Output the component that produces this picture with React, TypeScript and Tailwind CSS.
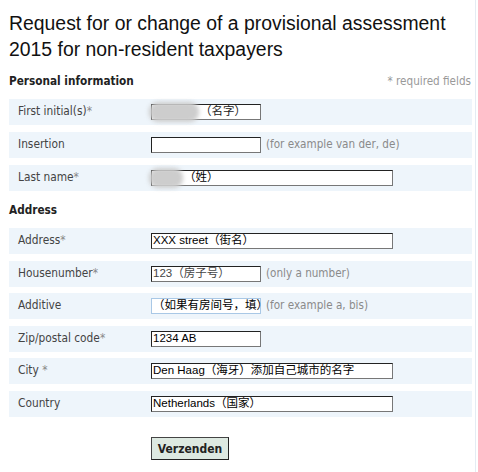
import React from "react";

const labelFont = { fontFamily: '"DejaVu Sans Condensed", "DejaVu Sans", Verdana, sans-serif' };
const inputFont = { fontFamily: '"Liberation Sans", Arial, "Noto Sans CJK SC", sans-serif' };

function Row({ label, star, children, hint }: { label: string; star?: string; children: React.ReactNode; hint?: string }) {
  return (
    <div className="flex items-center h-[26px] bg-[#eef5fb]">
      <div className="w-[142px] pl-[9px] text-[11.8px] text-[#444]" style={labelFont}>
        {label}
        {star && <span className="text-[#888]">{star}</span>}
      </div>
      {children}
      {hint && (
        <span className="ml-[5px] text-[11.6px] text-[#8a8a8a]" style={labelFont}>
          {hint}
        </span>
      )}
    </div>
  );
}

function Box({ w, children, light }: { w: number; children?: React.ReactNode; light?: boolean }) {
  return (
    <div
      className={
        "relative h-[16px] bg-white flex items-center pl-[1px] text-[11.5px] leading-none text-black whitespace-nowrap overflow-visible " +
        (light ? "border border-[#a9c8e6]" : "border border-t-[#222] border-l-[#222] border-b-[#777] border-r-[#777]")
      }
      style={{ width: w, ...inputFont }}
    >
      {children}
    </div>
  );
}

function Blur({ w }: { w: number }) {
  return <span className="inline-block h-[20px] rounded-[9px] bg-[#cdcdcd] blur-[2px] -ml-[4px] mr-[1px]" style={{ width: w }} />;
}

export default function App() {
  return (
    <div className="w-[478px] h-[472px] bg-white overflow-hidden">
      <div className="w-[476px] h-[472px] border-r border-[#e4ecf3] pl-[9px] pr-[3px]">
        <h1
          className="pt-[10px] text-[19.4px] leading-[26px] text-[#111] font-normal"
          style={{ fontFamily: '"Liberation Sans", Arial, sans-serif' }}
        >
          Request for or change of a provisional assessment 2015 for non-resident taxpayers
        </h1>
        <div className="flex justify-between items-center mt-[13px] h-[14px]" style={labelFont}>
          <span className="text-[11.7px] font-bold text-[#222]">Personal information</span>
          <span className="text-[11.6px] text-[#999] mr-[1px]">* required fields</span>
        </div>
        <div className="mt-[10px] flex flex-col gap-[7px]">
          <Row label="First initial(s)" star="*">
            <Box w={110}>
              <Blur w={50} />
              <span className="text-[#222]">（名字）</span>
            </Box>
          </Row>
          <Row label="Insertion" hint="(for example van der, de)">
            <Box w={110} />
          </Row>
          <Row label="Last name" star="*">
            <Box w={242}>
              <Blur w={34} />
              <span>（姓）</span>
            </Box>
          </Row>
        </div>
        <div className="mt-[11px] h-[14px] text-[11.7px] font-bold text-[#222]" style={labelFont}>
          Address
        </div>
        <div className="mt-[12px] flex flex-col gap-[6.5px]">
          <Row label="Address" star="*">
            <Box w={242}>XXX street（街名）</Box>
          </Row>
          <Row label="Housenumber" star="*" hint="(only a number)">
            <Box w={110}><span className="text-[#444]">123（房子号）</span></Box>
          </Row>
          <Row label="Additive" hint="(for example a, bis)">
            <Box w={110} light>（如果有房间号，填）</Box>
          </Row>
          <Row label="Zip/postal code" star="*">
            <Box w={110}>1234 AB</Box>
          </Row>
          <Row label="City" star=" *">
            <Box w={242}>Den Haag（海牙）添加自己城市的名字</Box>
          </Row>
          <Row label="Country">
            <Box w={242}>Netherlands（国家）</Box>
          </Row>
        </div>
        <div className="pl-[142px] mt-[18px]">
          <button
            className="w-[78px] h-[23px] bg-[#dde9e1] border border-t-[#444] border-l-[#444] border-r-[#222] border-b-[#222] text-[12px] font-bold text-[#222]"
            style={labelFont}
          >
            Verzenden
          </button>
        </div>
      </div>
    </div>
  );
}
